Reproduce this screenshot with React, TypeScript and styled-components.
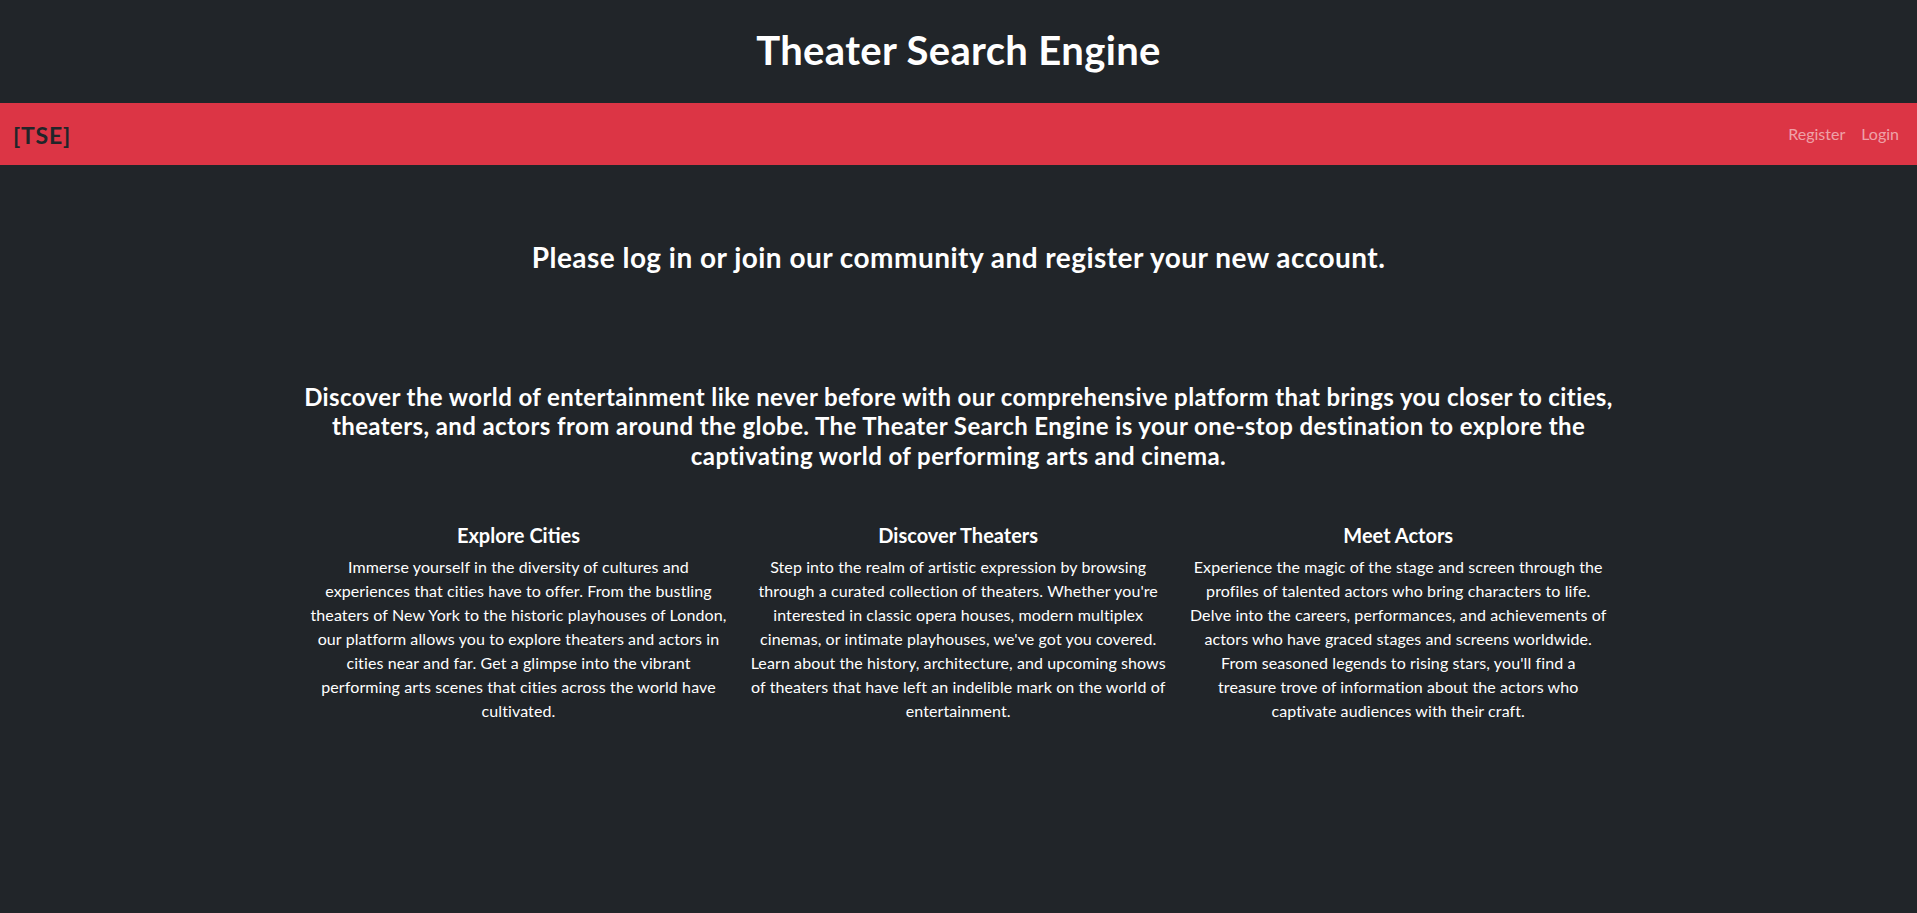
import React from "react";
import styled, { createGlobalStyle } from "styled-components";

const GlobalStyle = createGlobalStyle`
  html, body {
    margin: 0;
    padding: 0;
    background: #212529;
  }
  body {
    font-family: Lato, "Noto Sans", "Liberation Sans", sans-serif;
    color: #ffffff;
    -webkit-font-smoothing: antialiased;
  }
  * { box-sizing: border-box; }
`;

const Page = styled.div`
  min-height: 913px;
  background: #212529;
`;

const Header = styled.header`
  display: flex;
  justify-content: center;
  padding: 26px 0 29px;
`;

const Title = styled.h1`
  margin: 0;
  font-size: 40px;
  line-height: 48px;
  font-weight: 700;
  letter-spacing: 0.35px;
  color: #ffffff;
`;

const Navbar = styled.nav`
  display: flex;
  align-items: center;
  justify-content: space-between;
  height: 62px;
  padding: 0 10px 0 13px;
  background: #dc3545;
`;

const Brand = styled.a`
  font-size: 23px;
  font-weight: 700;
  letter-spacing: 0.8px;
  color: #212529;
  text-decoration: none;
  line-height: 30px;
  margin-top: 2px;
`;

const NavLinks = styled.div`
  display: flex;
  align-items: center;
`;

const NavLink = styled.a`
  padding: 8px;
  font-size: 16px;
  line-height: 24px;
  color: rgba(255, 255, 255, 0.55);
  text-decoration: none;
`;

const Main = styled.main`
  max-width: 1320px;
  margin: 0 auto;
  text-align: center;
`;

const Prompt = styled.h3`
  margin: 75px 0 0;
  font-size: 28px;
  line-height: 34px;
  font-weight: 700;
  letter-spacing: 0.47px;
`;

const Intro = styled.h4`
  margin: 108px 0 0;
  font-size: 24px;
  line-height: 29.4px;
  font-weight: 700;
  letter-spacing: 0.4px;
`;

const Features = styled.div`
  display: grid;
  grid-template-columns: repeat(3, 1fr);
  margin-top: 52.5px;
`;

const Feature = styled.section`
  padding: 0 12px;
`;

const FeatureTitle = styled.h5`
  margin: 0 0 8px;
  font-size: 20px;
  line-height: 24px;
  font-weight: 700;
`;

const FeatureText = styled.p`
  margin: 0;
  font-size: 16px;
  line-height: 24px;
  font-weight: 400;
  letter-spacing: 0.1px;
`;

const Line = styled.span`
  display: block;
  white-space: nowrap;
`;

const features = [
  {
    title: "Explore Cities",
    lines: [
      "Immerse yourself in the diversity of cultures and",
      "experiences that cities have to offer. From the bustling",
      "theaters of New York to the historic playhouses of London,",
      "our platform allows you to explore theaters and actors in",
      "cities near and far. Get a glimpse into the vibrant",
      "performing arts scenes that cities across the world have",
      "cultivated.",
    ],
  },
  {
    title: "Discover Theaters",
    lines: [
      "Step into the realm of artistic expression by browsing",
      "through a curated collection of theaters. Whether you're",
      "interested in classic opera houses, modern multiplex",
      "cinemas, or intimate playhouses, we've got you covered.",
      "Learn about the history, architecture, and upcoming shows",
      "of theaters that have left an indelible mark on the world of",
      "entertainment.",
    ],
  },
  {
    title: "Meet Actors",
    lines: [
      "Experience the magic of the stage and screen through the",
      "profiles of talented actors who bring characters to life.",
      "Delve into the careers, performances, and achievements of",
      "actors who have graced stages and screens worldwide.",
      "From seasoned legends to rising stars, you'll find a",
      "treasure trove of information about the actors who",
      "captivate audiences with their craft.",
    ],
  },
];

export default function App() {
  return (
    <Page>
      <GlobalStyle />
      <Header>
        <Title>Theater Search Engine</Title>
      </Header>
      <Navbar>
        <Brand href="#">[TSE]</Brand>
        <NavLinks>
          <NavLink href="#">Register</NavLink>
          <NavLink href="#">Login</NavLink>
        </NavLinks>
      </Navbar>
      <Main>
        <Prompt>Please log in or join our community and register your new account.</Prompt>
        <Intro>
          Discover the world of entertainment like never before with our comprehensive platform that brings you closer to cities, theaters, and actors from around the globe. The Theater Search Engine is your one-stop destination to explore the captivating world of performing arts and cinema.
        </Intro>
        <Features>
          {features.map((f) => (
            <Feature key={f.title}>
              <FeatureTitle>{f.title}</FeatureTitle>
              <FeatureText>
                {f.lines.map((l, i) => (
                  <Line key={i}>{l}</Line>
                ))}
              </FeatureText>
            </Feature>
          ))}
        </Features>
      </Main>
    </Page>
  );
}
